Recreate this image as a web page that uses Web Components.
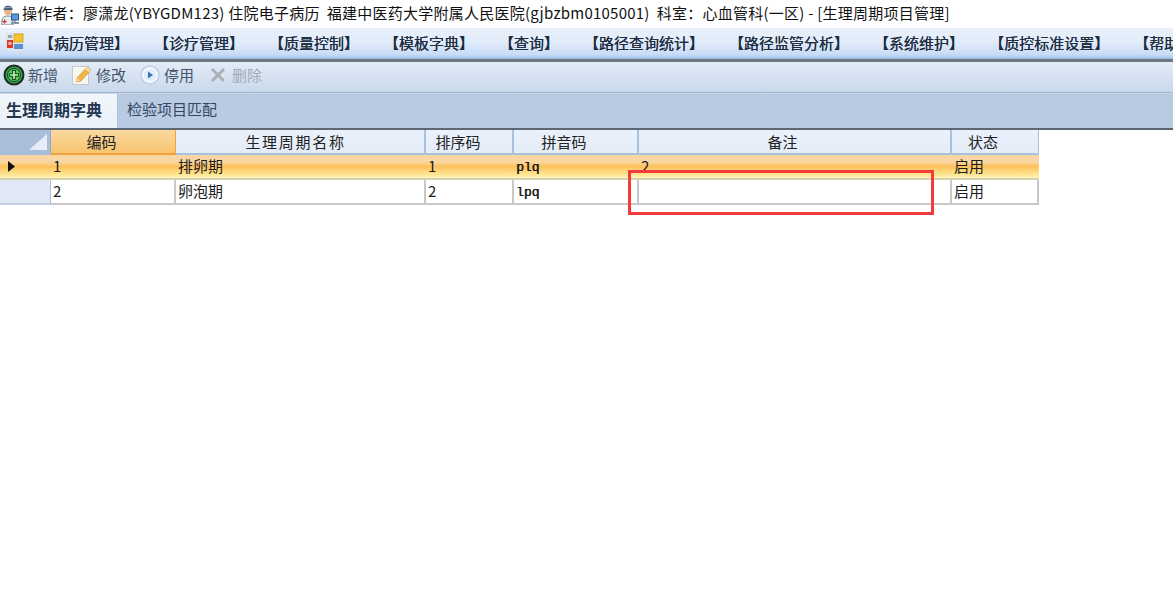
<!DOCTYPE html>
<html lang="zh"><head><meta charset="utf-8"><title>生理周期项目管理</title>
<style>
html,body{margin:0;padding:0;background:#fff;width:1173px;height:616px;overflow:hidden;font-family:"Noto Sans CJK SC","Noto Sans",sans-serif;color:#111}
</style></head><body>
<app-shell>
<title-bar>操作者：廖潇龙(YBYGDM123) 住院电子病历&nbsp; 福建中医药大学附属人民医院(gjbzbm0105001)&nbsp; 科室：心血管科(一区) - [生理周期项目管理]</title-bar>
<menu-bar>
<menu-item>【病历管理】</menu-item><menu-item>【诊疗管理】</menu-item><menu-item>【质量控制】</menu-item><menu-item>【模板字典】</menu-item><menu-item>【查询】</menu-item><menu-item>【路径查询统计】</menu-item><menu-item>【路径监管分析】</menu-item><menu-item>【系统维护】</menu-item><menu-item>【质控标准设置】</menu-item><menu-item>【帮助】</menu-item>
</menu-bar>
<tool-bar>
<tool-button kind="add">新增</tool-button><tool-button kind="edit">修改</tool-button><tool-button kind="stop">停用</tool-button><tool-button kind="del" disabled>删除</tool-button>
</tool-bar>
<tab-strip><tab-item active>生理周期字典</tab-item><tab-item>检验项目匹配</tab-item></tab-strip>
<data-grid></data-grid>
</app-shell>
<script>
function def(name,html,init){customElements.define(name,class extends HTMLElement{constructor(){super();this.attachShadow({mode:'open'}).innerHTML=html;}connectedCallback(){init&&init.call(this)}})}
def('app-shell',`<style>:host{display:block;position:relative;width:1173px;height:616px;overflow:hidden}
.mark{position:absolute;left:628px;top:170px;width:300px;height:39px;border:3px solid #f33b3b;pointer-events:none}</style><slot></slot><div class="mark"></div>`);
def('title-bar',`<style>:host{display:flex;align-items:center;gap:3px;height:28px;box-sizing:border-box;padding:0 0 4px 1px;background:#fff;font-size:15px;letter-spacing:.24px;white-space:nowrap;color:#111}
svg{flex:none;margin-top:4px}</style>
<svg width="18" height="21" viewBox="0 0 18 21"><path d="M1 21C0 13 3 12 7 12S12 14 12 21Z" fill="#e8edf3" stroke="#51687f" stroke-width=".8"/><circle cx="7" cy="7" r="4" fill="#e6b48c"/><path d="M2.500 6C2 1 12 0 11.500 6Z" fill="#465a72"/><path d="M3 4L11 3" stroke="#b7c4d2" stroke-width=".8"/><rect x="1.500" y="17" width="4" height="1.200" fill="#d2232a"/><rect x="3" y="15.500" width="1.200" height="4" fill="#d2232a"/><rect x="10.500" y="10" width="7" height="6" fill="#4f9be4" stroke="#3e5470"/><rect x="10" y="18" width="8" height="2" fill="#8096ad"/><rect x="13.500" y="16" width="1" height="2" fill="#3e5470"/></svg><slot></slot>`);
def('menu-bar',`<style>:host{display:flex;align-items:center;height:31px;box-sizing:border-box;padding:0 0 2px 6px;overflow:hidden;white-space:nowrap;background:linear-gradient(#e9f0fa 0,#e2ecfa 45%,#c8dcf7 88%,#a9c6ee 100%);font-size:15px;color:#1f2d3f;border-bottom:1px solid #9cbce6}
svg{flex:none;margin-right:15px}.g{display:flex;gap:25px}</style>
<svg width="18" height="18" viewBox="0 0 18 18"><rect width="18" height="18" fill="#dfe4ea"/><rect x="1" y="7" width="6" height="8" fill="#d63a2c"/><rect x="2.500" y="9" width="3" height="3" fill="#f3b8a8"/><rect x="8" y="1" width="9" height="8" fill="#f6c52e" stroke="#c89a20" stroke-width=".7"/><rect x="8" y="11" width="9" height="5" fill="#5a8fd0"/><rect x="2" y="2" width="4" height="3" fill="#9aa5b3"/></svg><div class="g"><slot></slot></div>`);
def('menu-item',`<style>:host{display:block;font-weight:400;text-shadow:0 0 .5px #1f2d3f}</style><slot></slot>`);
const icons={
add:`<svg width="22" height="22" viewBox="0 0 22 22"><circle cx="11" cy="11" r="9.500" fill="#35a04a" stroke="#1f2a20" stroke-width="2"/><circle cx="11" cy="11" r="6.500" fill="#57c45d" stroke="#174d22"/><path d="M11 6v10M6 11h10" stroke="#0f4a1e" stroke-width="3.600"/><path d="M11 7v8M7 11h8" stroke="#c8f5b6" stroke-width="1.600"/></svg>`,
edit:`<svg width="22" height="22" viewBox="0 0 22 22"><rect x="1.500" y="2.500" width="16" height="18" fill="#f7f7f2" stroke="#c7c9cc"/><path d="M5 18l1-4L16 3l4 3-10 11z" fill="#f1b447" stroke="#c98b2c" stroke-width=".6"/><path d="M16 3l4 3-2 2-4-3z" fill="#f6e09a"/><path d="M5 18l1-4 3 2.500z" fill="#f4d8a8"/></svg>`,
stop:`<svg width="22" height="22" viewBox="0 0 22 22"><circle cx="11" cy="11" r="9" fill="#f3f7fd" stroke="#bcd0ea" stroke-width="1.500"/><circle cx="11" cy="11" r="6" fill="#e2ecf9"/><path d="M9 7.500l5 3.500-5 3.500z" fill="#3d74b5"/></svg>`,
del:`<svg width="18" height="18" viewBox="0 0 18 18"><path d="M2 4l2-2 5 5 5-5 2 2-5 5 5 5-2 2-5-5-5 5-2-2 5-5z" fill="#a9afb5" stroke="#c4c9ce" stroke-width=".5"/></svg>`};
def('tool-bar',`<style>:host{display:flex;align-items:center;gap:13px;height:34px;box-sizing:border-box;padding:0 0 5px 3px;border-top:3px solid #6f7780;border-bottom:1px solid #9fb4cf;background:linear-gradient(#e2ecf8,#c9d8eb);font-size:15px;color:#44556b}</style><slot></slot>`);
customElements.define('tool-button',class extends HTMLElement{constructor(){super();this.attachShadow({mode:'open'}).innerHTML=`<style>:host{display:flex;align-items:center;gap:3px;white-space:nowrap}:host([disabled]){color:#a3aab3}#i{display:flex;width:22px;height:22px;align-items:center;justify-content:center}svg{flex:none}</style><span id="i"></span><slot></slot>`}connectedCallback(){this.shadowRoot.getElementById('i').innerHTML=icons[this.getAttribute('kind')]}});
def('tab-strip',`<style>:host{display:flex;height:37px;box-sizing:border-box;background:#b9cbe3;border-top:1px solid #c8d6e8;border-bottom:2px solid #5c6773}</style><slot></slot>`);
def('tab-item',`<style>:host{display:flex;align-items:center;height:34px;width:117px;box-sizing:border-box;padding:0 0 5px 9px;font-size:15px;color:#34465f;white-space:nowrap;border-left:1px solid #aec2dc;}
:host([active]){border:0;padding-left:6px;background:linear-gradient(#f2f6fc,#e9f0f9);font-weight:700;font-size:16px;color:#22364f}</style><slot></slot>`);
const cols=[51,125,250,88,125,313,87];
const heads=[['编码',23,0],['生理周期名称',9,1.700],['排序码',22,0],['拼音码',23,0],['备注',24,0],['状态',24,0]];
const rows=[['1','排卵期','1','plq','2','启用'],['2','卵泡期','2','lpq','','启用']];
customElements.define('data-grid',class extends HTMLElement{constructor(){super();const s=this.attachShadow({mode:'open'});
let h=`<style>:host{display:block;font-size:15px;color:#1c1c1c}
.g{display:grid;grid-template-columns:${cols.map(c=>c+'px').join(' ')};grid-template-rows:25px 25px 25px;width:max-content}
.c{box-sizing:border-box;display:flex;align-items:center;padding-left:2px;white-space:nowrap;overflow:hidden}
.h{justify-content:center;padding:0;background:linear-gradient(#eaf1fb,#e4ecf8);border-right:2px solid #a9c0db;border-bottom:2px solid #a9c0db;color:#222}
.h.last{border-right:1px solid #a9c0db}
.h.sel{background:linear-gradient(#fad99f,#f8c46f);border-right:1px solid #f0a23c;border-bottom:2px solid #f0a23c}
.corner{background:#a9bfd9;border-right:1px solid #8fa9c8;position:relative;border-bottom:2px solid #a9c0db}
.corner svg{position:absolute;right:3px;bottom:3px}
.rh{background:#dfe8f4;border-right:1px solid #a9c0db;border-bottom:2px solid #c3cfdf;padding-left:8px}
.rh.on{background:#fbd184;border-right:1px solid #f0a23c;border-bottom:1px solid #f0c080}
.c.d{border-right:2px solid #c8c8c8;border-bottom:2px solid #c8c8c8;background:#fff;padding-bottom:2px}
.c.on{background:linear-gradient(#f8d5a5 0,#f9d7a2 30%,#fdc25c 50%,#fde38e 82%,#fff2b8 100%);border-right:0;border-bottom:2px solid #d9d2b0}
.m{font-family:"Liberation Mono","DejaVu Sans Mono",monospace;font-size:13px;text-shadow:.4px 0 0 #1c1c1c;padding-top:3px}
</style><div class="g" part="grid"><div class="c corner"><svg width="18" height="16" viewBox="0 0 18 16"><path d="M18 0V16H0Z" fill="#e6edf6"/></svg></div>`;
heads.forEach(([t,p,l],i)=>h+=`<div class="c h ${i==0?'sel':''} ${i==5?'last':''}" style="padding-right:${p}px;letter-spacing:${l}px">${t}</div>`);
rows.forEach((r,ri)=>{const on=ri==0;
h+=`<div class="c rh ${on?'on':''}">${on?'<svg width="7" height="11" viewBox="0 0 7 11"><path d="M0 0L7 5.500 0 11Z" fill="#111"/></svg>':''}</div>`;
r.forEach((t,i)=>h+=`<div class="c d ${on?'on':''}"><span class="${i==3?'m':''}">${t}</span></div>`);});
s.innerHTML=h+'</div>';}});
</script>
</body></html>
